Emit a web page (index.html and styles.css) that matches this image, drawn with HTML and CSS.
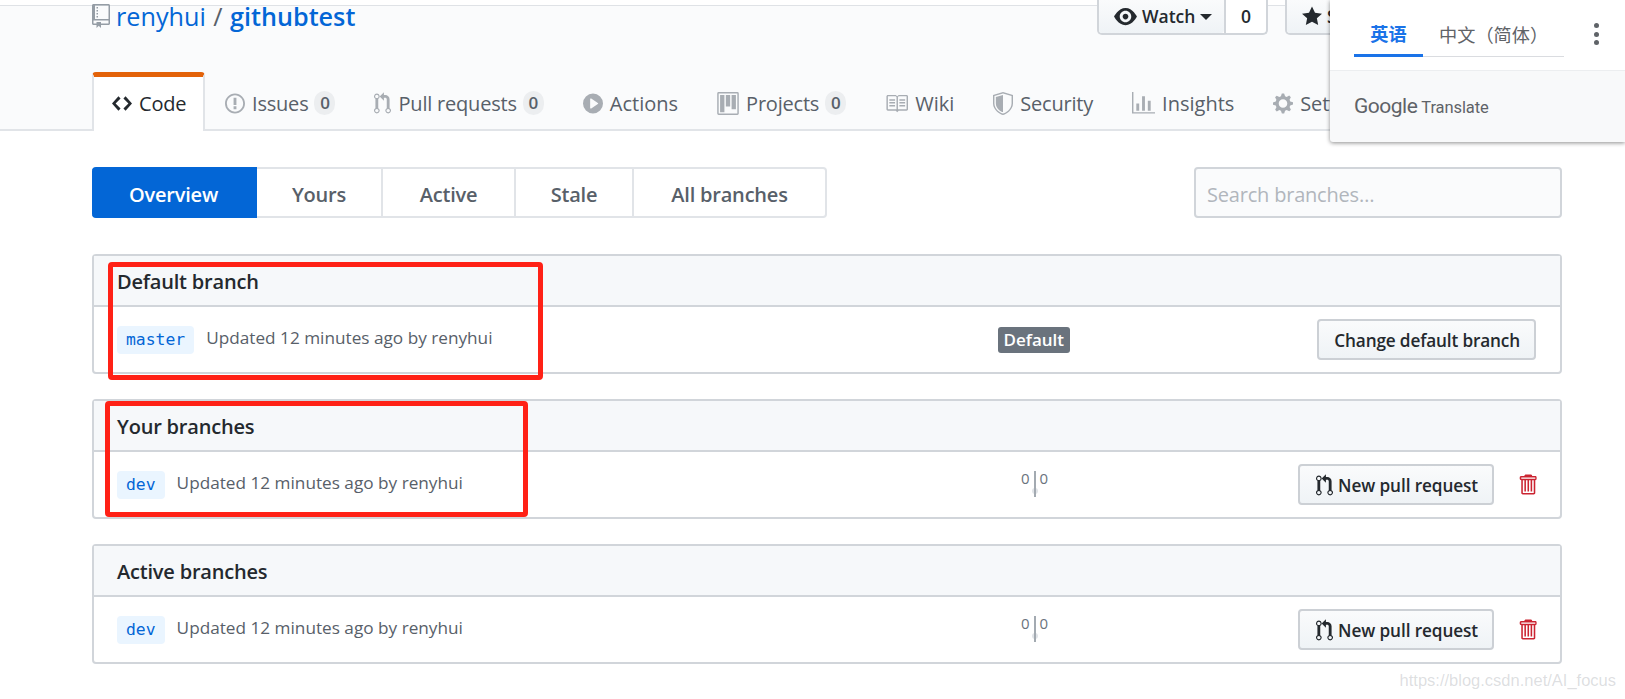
FILE: index.html
```html
<!DOCTYPE html>
<html lang="en">
<head>
<meta charset="utf-8">
<title>Branches · renyhui/githubtest</title>
<link rel="stylesheet" href="styles.css">
</head>
<body>
<svg class="defs" width="0" height="0" aria-hidden="true">
  <defs>
    <symbol id="i-repo" viewBox="0 0 12 16"><path fill-rule="evenodd" d="M4 9H3V8h1v1zm0-3H3v1h1V6zm0-2H3v1h1V4zm0-2H3v1h1V2zm8-1v12c0 .55-.45 1-1 1H6v2l-1.5-1.5L3 16v-2H1c-.55 0-1-.45-1-1V1c0-.55.45-1 1-1h10c.55 0 1 .45 1 1zm-1 10H1v2h2v-1h3v1h5v-2zm0-10H2v9h9V1z"/></symbol>
    <symbol id="i-code" viewBox="0 0 14 16"><path fill-rule="evenodd" d="M9.5 3L8 4.5 11.5 8 8 11.5 9.5 13 14 8 9.5 3zm-5 0L0 8l4.5 5L6 11.5 2.5 8 6 4.5 4.5 3z"/></symbol>
    <symbol id="i-issue" viewBox="0 0 14 16"><path fill-rule="evenodd" d="M7 2.3c3.14 0 5.7 2.56 5.7 5.7s-2.56 5.7-5.7 5.7A5.71 5.71 0 0 1 1.3 8c0-3.14 2.56-5.7 5.7-5.7zM7 1C3.14 1 0 4.14 0 8s3.14 7 7 7 7-3.14 7-7-3.14-7-7-7zm1 3H6v5h2V4zm0 6H6v2h2v-2z"/></symbol>
    <symbol id="i-pr" viewBox="0 0 12 16"><path fill-rule="evenodd" d="M11 11.28V5c-.03-.78-.34-1.47-.94-2.06C9.46 2.35 8.78 2.03 8 2H7V0L4 3l3 3V4h1c.27.02.48.11.69.31.21.2.3.42.31.69v6.28A1.993 1.993 0 0 0 10 15a1.993 1.993 0 0 0 1-3.72zm-1 2.92c-.66 0-1.2-.55-1.2-1.2 0-.65.55-1.2 1.2-1.2.65 0 1.2.55 1.2 1.2 0 .65-.55 1.2-1.2 1.2zM4 3c0-1.11-.89-2-2-2a1.993 1.993 0 0 0-1 3.72v6.56A1.993 1.993 0 0 0 2 15a1.993 1.993 0 0 0 1-3.72V4.72c.59-.34 1-.98 1-1.72zm-.8 10c0 .66-.55 1.2-1.2 1.2-.65 0-1.2-.55-1.2-1.2 0-.65.55-1.2 1.2-1.2.65 0 1.2.55 1.2 1.2zM2 4.2C1.34 4.2.8 3.65.8 3c0-.65.55-1.2 1.2-1.2.65 0 1.2.55 1.2 1.2 0 .65-.55 1.2-1.2 1.2z"/></symbol>
    <symbol id="i-play" viewBox="0 0 14 16"><path fill-rule="evenodd" d="M14 8A7 7 0 1 1 0 8a7 7 0 0 1 14 0zm-8.223 3.482l4.599-3.066a.5.5 0 0 0 0-.832L5.777 4.518A.5.5 0 0 0 5 4.934v6.132a.5.5 0 0 0 .777.416z"/></symbol>
    <symbol id="i-project" viewBox="0 0 15 16"><path fill-rule="evenodd" d="M10 12h3V2h-3v10zm-4-2h3V2H6v8zm-4 4h3V2H2v12zm-1 1h13V1H1v14zM14 0H1a1 1 0 0 0-1 1v14a1 1 0 0 0 1 1h13a1 1 0 0 0 1-1V1a1 1 0 0 0-1-1z"/></symbol>
    <symbol id="i-book" viewBox="0 0 16 16"><path fill-rule="evenodd" d="M3 5h4v1H3V5zm0 3h4V7H3v1zm0 2h4V9H3v1zm11-5h-4v1h4V5zm0 2h-4v1h4V7zm0 2h-4v1h4V9zm2-6v9c0 .55-.45 1-1 1H9.5l-1 1-1-1H2c-.55 0-1-.45-1-1V3c0-.55.45-1 1-1h5.5l1 1 1-1H15c.55 0 1 .45 1 1zm-8 .5L7.5 3H2v9h6V3.5zm7-.5H9.5l-.5.5V12h6V3z"/></symbol>
    <symbol id="i-shield" viewBox="0 0 14 16"><path fill-rule="evenodd" d="M0 2l7-2 7 2v6.02C14 12.69 8.69 16 7 16c-1.69 0-7-3.31-7-7.98V2zm1 .75L7 1l6 1.75v5.268C13 12.104 8.449 15 7 15c-1.449 0-6-2.896-6-6.982V2.75zm1 .75L7 2v12c-1.207 0-5-2.412-5-5.815V3.5z"/></symbol>
    <symbol id="i-graph" viewBox="0 0 16 16"><path fill-rule="evenodd" d="M16 14v1H0V0h1v14h15zM5 13H3V8h2v5zm4 0H7V3h2v10zm4 0h-2V6h2v7z"/></symbol>
    <symbol id="i-gear" viewBox="0 0 14 16"><path fill-rule="evenodd" d="M14 8.77v-1.6l-1.94-.64-.45-1.09.88-1.84-1.13-1.13-1.81.91-1.09-.45-.69-1.92h-1.6l-.63 1.94-1.11.45-1.84-.88-1.13 1.13.91 1.81-.45 1.09L0 7.23v1.59l1.94.64.45 1.09-.88 1.84 1.13 1.13 1.81-.91 1.09.45.69 1.92h1.59l.63-1.94 1.11-.45 1.84.88 1.13-1.13-.92-1.81.47-1.09L14 8.75v.02zM7 11c-1.66 0-3-1.34-3-3s1.34-3 3-3 3 1.34 3 3-1.34 3-3 3z"/></symbol>
    <symbol id="i-eye" viewBox="0 0 16 16"><path fill-rule="evenodd" d="M8.06 2C3 2 0 8 0 8s3 6 8.06 6C13 14 16 8 16 8s-3-6-7.94-6zM8 12c-2.2 0-4-1.78-4-4 0-2.2 1.8-4 4-4 2.22 0 4 1.8 4 4 0 2.22-1.78 4-4 4zm2-4c0 1.11-.89 2-2 2-1.11 0-2-.89-2-2 0-1.11.89-2 2-2 1.11 0 2 .89 2 2z"/></symbol>
    <symbol id="i-star" viewBox="0 0 14 16"><path fill-rule="evenodd" d="M14 6l-4.9-.64L7 1 4.9 5.36 0 6l3.6 3.26L2.67 14 7 11.67 11.33 14l-.93-4.74L14 6z"/></symbol>
    <symbol id="i-trash" viewBox="0 0 12 16"><path fill-rule="evenodd" d="M11 2H9c0-.55-.45-1-1-1H5c-.55 0-1 .45-1 1H2c-.55 0-1 .45-1 1v1c0 .55.45 1 1 1v9c0 .55.45 1 1 1h7c.55 0 1-.45 1-1V5c.55 0 1-.45 1-1V3c0-.55-.45-1-1-1zm-1 12H3V5h1v8h1V5h1v8h1V5h1v8h1V5h1v9zm1-10H2V3h9v1z"/></symbol>
  </defs>
</svg>

<div class="topstrip"></div>
<header class="pagehead">
  <div class="repohead">
    <h1 class="repo-title">
      <svg class="ico-repo"><use href="#i-repo"/></svg>
      <a class="owner">renyhui</a><span class="sep">/</span><a class="repo-name">githubtest</a>
    </h1>
    <div class="actions">
      <div class="btn-group">
        <span class="btn-main"><svg class="ico-eye"><use href="#i-eye"/></svg>Watch<i class="caret"></i></span><span class="btn-count">0</span>
      </div>
      <div class="btn-group star-group">
        <span class="btn-main"><svg class="ico-star"><use href="#i-star"/></svg>Star</span>
      </div>
    </div>
  </div>
  <nav class="tabs">
    <a class="tab selected"><svg class="ico w14"><use href="#i-code"/></svg>Code</a>
    <a class="tab"><svg class="ico w14"><use href="#i-issue"/></svg>Issues<span class="counter">0</span></a>
    <a class="tab"><svg class="ico w12"><use href="#i-pr"/></svg>Pull requests<span class="counter">0</span></a>
    <a class="tab tab-loose"><svg class="ico w14"><use href="#i-play"/></svg>Actions</a>
    <a class="tab"><svg class="ico w15"><use href="#i-project"/></svg>Projects<span class="counter">0</span></a>
    <a class="tab tab-loose"><svg class="ico w16"><use href="#i-book"/></svg>Wiki</a>
    <a class="tab"><svg class="ico w14"><use href="#i-shield"/></svg>Security</a>
    <a class="tab tab-loose"><svg class="ico w16"><use href="#i-graph"/></svg>Insights</a>
    <a class="tab"><svg class="ico w14"><use href="#i-gear"/></svg>Settings</a>
  </nav>
</header>

<main class="main">
  <div class="filter-row">
    <nav class="subnav">
      <a class="sub active w-over">Overview</a>
      <a class="sub w-yours">Yours</a>
      <a class="sub w-active">Active</a>
      <a class="sub w-stale">Stale</a>
      <a class="sub w-all">All branches</a>
    </nav>
    <div class="search">Search branches…</div>
  </div>

  <section class="box">
    <h3 class="box-head">Default branch</h3>
    <div class="row">
      <div class="branch"><code class="ref">master</code><span class="updated">Updated 12 minutes ago by renyhui</span></div>
      <div class="mid"><span class="label">Default</span></div>
      <div class="end"><span class="btn btn-wide">Change default branch</span></div>
    </div>
  </section>

  <section class="box">
    <h3 class="box-head">Your branches</h3>
    <div class="row">
      <div class="branch"><code class="ref">dev</code><span class="updated">Updated 12 minutes ago by renyhui</span></div>
      <div class="mid"><span class="ahead"><span class="num">0</span><i class="bar"></i><span class="num">0</span></span></div>
      <div class="end"><span class="btn btn-pr"><svg class="ico-pr"><use href="#i-pr"/></svg>New pull request</span><svg class="ico-trash"><use href="#i-trash"/></svg></div>
    </div>
  </section>

  <section class="box">
    <h3 class="box-head">Active branches</h3>
    <div class="row">
      <div class="branch"><code class="ref">dev</code><span class="updated">Updated 12 minutes ago by renyhui</span></div>
      <div class="mid"><span class="ahead"><span class="num">0</span><i class="bar"></i><span class="num">0</span></span></div>
      <div class="end"><span class="btn btn-pr"><svg class="ico-pr"><use href="#i-pr"/></svg>New pull request</span><svg class="ico-trash"><use href="#i-trash"/></svg></div>
    </div>
  </section>
</main>

<div class="mark mark-one"></div>
<div class="mark mark-two"></div>

<aside class="gt">
  <div class="gt-top">
    <div class="gt-tabs">
      <span class="gt-tab on">英语</span>
      <span class="gt-tab">中文（简体）</span>
    </div>
    <span class="gt-more"><i></i><i></i><i></i></span>
  </div>
  <div class="gt-foot"><span class="g-word">Google</span><span class="t-word">Translate</span></div>
</aside>

<div class="watermark">https://blog.csdn.net/AI_focus</div>
</body>
</html>
```

FILE: styles.css
```css
* { box-sizing: border-box; }
html, body { margin: 0; padding: 0; }
body {
  width: 1625px;
  height: 699px;
  overflow: hidden;
  position: relative;
  background: #fff;
  color: #24292e;
  font-family: "Open Sans", "Noto Sans", "Liberation Sans", sans-serif;
  font-size: 20px;
}
.defs { position: absolute; }
.topstrip { height: 6px; background: #fff; border-bottom: 1px solid #dfe2e6; }

.pagehead {
  height: 125px;
  background: #fafbfc;
  border-bottom: 2px solid #e1e4e8;
  display: flex;
  flex-direction: column;
  justify-content: space-between;
  padding-left: 92px;
}
.repohead {
  height: 29px;
  display: flex;
  justify-content: space-between;
  position: relative;
}
.repo-title {
  margin: -10px 0 0;
  font-size: 25.2px;
  line-height: 34px;
  font-weight: 400;
  display: flex;
  align-items: center;
  color: #586069;
}
.ico-repo { width: 18px; height: 24px; fill: #959da5; margin-right: 6px; }
.owner { color: #0366d6; }
.sep { margin: 0 7.5px; color: #586069; }
.repo-name { color: #0366d6; font-weight: 600; }
.actions { display: flex; position: absolute; left: 1005px; top: -6px; gap: 17px; }
.btn-group {
  display: flex;
  height: 35px;
  border: 2px solid #d1d5da;
  border-top: 0;
  border-radius: 0 0 5px 5px;
  background: #fff;
  font-size: 17.5px;
  font-weight: 600;
  line-height: 33px;
}
.btn-main {
  display: flex;
  align-items: center;
  background: linear-gradient(#fafbfc, #eff3f6);
  padding: 0 15px 0 15px;
  border-radius: 0 0 3px 3px;
  width: 125px;
  white-space: nowrap;
}
.btn-count { width: 42px; text-align: center; border-left: 2px solid #d1d5da; font-weight: 600; }
.star-group .btn-main { width: 100px; }
.ico-eye { width: 23px; height: 23px; fill: #24292e; margin-right: 5px; flex: none; }
.ico-star { width: 20px; height: 23px; fill: #24292e; margin-right: 5px; flex: none; }
.caret {
  width: 0; height: 0; margin-left: 5px;
  border: 6px solid transparent;
  border-top-color: #24292e;
  border-bottom: 0;
}

.tabs {
  display: flex;
  align-items: stretch;
  width: 1238px;
  height: 59px;
  margin-bottom: -2px;
  overflow: hidden;
  letter-spacing: -.2px;
}
.tab {
  display: flex;
  align-items: center;
  padding: 3px 19px 0 20px;
  color: #586069;
  white-space: nowrap;
}
.tab-loose { letter-spacing: 0; }
.tab.selected {
  flex: none;
  width: 113px;
  padding: 0 0 1px 18px;
  background: #fff;
  color: #24292e;
  border: 2px solid #e1e4e8;
  border-top: 5px solid #e36209;
  border-bottom: 0;
  border-radius: 4px 4px 0 0;
}
.ico { height: 23px; margin-right: 7px; fill: #a8adb3; flex: none; }
.selected .ico { fill: #24292e; }
.w12 { width: 17px; }
.w14 { width: 20px; }
.w15 { width: 22px; }
.w16 { width: 23px; }
.counter {
  margin-left: 6px;
  padding: 0 5.5px;
  min-width: 21px;
  height: 24px;
  border-radius: 12px;
  background: #eceef0;
  color: #586069;
  font-size: 17px;
  font-weight: 600;
  line-height: 24px;
  text-align: center;
}

.main { padding: 36px 63px 0 92px; }
.filter-row { display: flex; justify-content: space-between; margin-bottom: 36px; letter-spacing: -.2px; }
.subnav { display: flex; height: 51px; }
.sub {
  display: flex;
  align-items: center;
  justify-content: center;
  height: 51px;
  padding-top: 3px;
  border: 2px solid #e1e4e8;
  border-left: 0;
  color: #586069;
  font-weight: 600;
}
.sub.active {
  background: #0366d6;
  border-color: #0366d6;
  color: #fff;
  border-radius: 4px 0 0 4px;
}
.sub:last-child { border-radius: 0 4px 4px 0; }
.w-over { width: 165px; }
.w-yours { width: 126px; }
.w-active { width: 133px; }
.w-stale { width: 118px; }
.w-all { width: 193px; }
.search {
  width: 368px;
  height: 51px;
  border: 2px solid #d1d5da;
  border-radius: 4px;
  background: #fafbfc;
  color: #b1b6bc;
  padding: 0 11px;
  line-height: 51px;
}

.box {
  border: 2px solid #d1d5da;
  border-radius: 4px;
  margin-bottom: 25px;
  height: 120px;
}
.box-head {
  margin: 0;
  height: 51px;
  background: #f6f8fa;
  border-bottom: 2px solid #d1d5da;
  padding-left: 23px;
  font-size: 20px;
  font-weight: 600;
  line-height: 52px;
  letter-spacing: -.2px;
}
.row {
  display: grid;
  grid-template-columns: 881px 150px 1fr;
  align-items: center;
  height: 65px;
  padding: 0 24px 0 23px;
}
.branch { display: flex; align-items: center; white-space: nowrap; }
.ref {
  font-family: "DejaVu Sans Mono", "Liberation Mono", monospace;
  font-size: 16.4px;
  line-height: 28px;
  height: 28px;
  padding: 0 9px;
  background: #eaf5ff;
  color: #0366d6;
  border-radius: 4px;
  margin: 1px 12px 0 0;
}
.updated { color: #586069; font-size: 17.2px; margin-top: -5px; }
.mid { display: flex; align-items: center; }
.label {
  background: #6a737d;
  color: #fff;
  font-size: 17px;
  font-weight: 600;
  height: 26px;
  line-height: 25px;
  padding: 0 5.5px;
  border-radius: 3px;
}
.ahead {
  display: flex;
  align-items: flex-start;
  height: 26px;
  margin: -2px 0 0 23px;
  font-size: 15px;
  line-height: 14px;
  color: #6a737d;
  gap: 4px;
}
.num { display: block; }
.bar { width: 2px; height: 26px; background: #a3aab1; display: block; position: relative; }
.bar::after {
  content: "";
  position: absolute;
  left: -2px;
  top: 17px;
  width: 6px;
  height: 6px;
  border-radius: 50%;
  background: #e1e4e8;
  z-index: -1;
}
.end { display: flex; justify-content: flex-end; align-items: center; }
.btn {
  display: flex;
  align-items: center;
  height: 41px;
  padding: 1px 14px 0;
  border: 2px solid #ccd0d5;
  border-radius: 4px;
  background: linear-gradient(#fafbfc, #eff3f6);
  color: #24292e;
  font-size: 17.2px;
  font-weight: 600;
  white-space: nowrap;
}
.btn-wide { letter-spacing: -.15px; padding-left: 15px; }
.btn-pr { letter-spacing: -.1px; padding-left: 16px; }
.ico-pr { width: 17px; height: 23px; fill: #24292e; margin-right: 5px; }
.ico-trash { width: 17px; height: 23px; fill: #cb2431; margin-left: 25px; transform: scaleX(1.1); }

.mark {
  position: absolute;
  border: 5px solid #ff2116;
  border-radius: 4px;
}
.mark-one { left: 108px; top: 262px; width: 435px; height: 118px; }
.mark-two { left: 105px; top: 401px; width: 423px; height: 116px; }

.gt {
  position: absolute;
  left: 1330px;
  top: 0;
  width: 295px;
  height: 142px;
  background: #f8f9fa;
  box-shadow: 0 1px 4px rgba(0, 0, 0, .45);
  border-radius: 0 0 0 3px;
}
.gt-top {
  height: 71px;
  background: #fff;
  border-bottom: 1px solid #eceef0;
  display: flex;
  padding-left: 24px;
  position: relative;
}
.gt-tabs {
  display: flex;
  width: 210px;
  height: 57px;
  border-bottom: 1px solid #dadce0;
  align-items: center;
  padding-top: 11px;
  font-family: "Noto Sans CJK SC", sans-serif;
  font-size: 18.2px;
}
.gt-tab { color: #5f6368; white-space: nowrap; }
.gt-tab.on {
  width: 69px;
  height: 43px;
  line-height: 38px;
  text-align: center;
  color: #1a73e8;
  font-weight: 700;
  border-bottom: 3px solid #1a73e8;
  margin: 0 16px -1px 0;
  flex: none;
  align-self: flex-end;
}
.gt-more {
  position: absolute;
  right: 26px;
  top: 23px;
  display: flex;
  flex-direction: column;
  gap: 3.5px;
}
.gt-more i { width: 5px; height: 5px; border-radius: 50%; background: #5f6368; display: block; }
.gt-foot {
  display: flex;
  align-items: baseline;
  padding: 23px 0 0 24px;
  color: #5f6368;
  white-space: nowrap;
}
.g-word { font-family: "Roboto", sans-serif; font-size: 21px; font-weight: 400; letter-spacing: -.5px; color: #5f6368; margin-right: 4px; }
.t-word { font-family: "Roboto", sans-serif; font-size: 16.5px; letter-spacing: -.1px; color: #5f6368; }

.watermark {
  position: absolute;
  right: 9px;
  top: 671px;
  font-family: "Liberation Sans", sans-serif;
  font-size: 16.5px;
  color: rgba(150, 155, 160, .32);
  white-space: nowrap;
}
```
